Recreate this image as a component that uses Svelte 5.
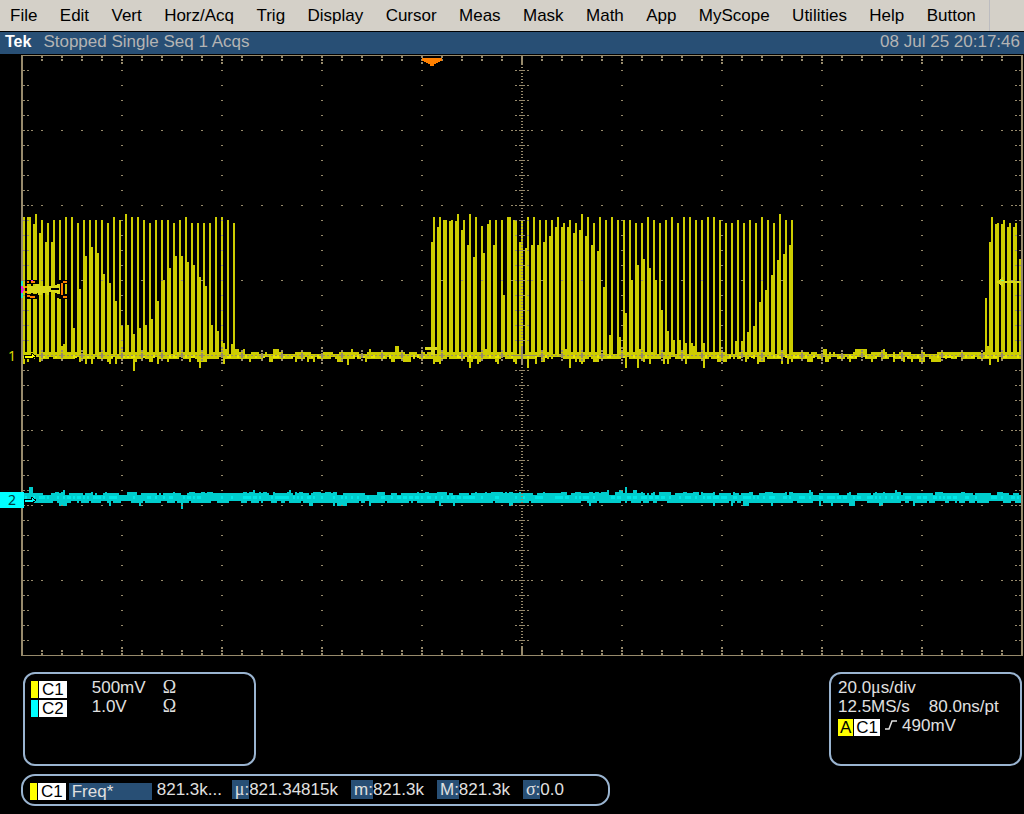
<script lang="ts">
  const menus = [
    'File', 'Edit', 'Vert', 'Horz/Acq', 'Trig', 'Display', 'Cursor', 'Meas',
    'Mask', 'Math', 'App', 'MyScope', 'Utilities', 'Help', 'Button',
  ];

  const channels = [
    { name: 'C1', scale: '500mV', color: 'yellow' },
    { name: 'C2', scale: '1.0V', color: 'cyan' },
  ];

  const stats = [
    { label: 'μ', value: '821.34815k', greek: true },
    { label: 'm', value: '821.3k' },
    { label: 'M', value: '821.3k' },
    { label: 'σ', value: '0.0', greek: true },
  ];

  // graticule: 10 x 8 divisions
  const LEFT = 21;
  const TOP = 55;
  const WIDTH = 1000;
  const HEIGHT = 600;
  const MID_X = 521;
  const MID_Y = 355;

  // pulse columns as x, top
  const pulses = [
    [23, 217], [27, 217], [29, 217], [33, 224], [35, 214], [39, 233], [41, 220],
    [45, 242], [47, 223], [51, 242], [53, 220], [57, 298], [59, 220], [61, 346], [63, 344],
    [65, 217], [71, 217], [73, 328], [77, 223], [79, 289], [83, 220], [85, 256],
    [89, 220], [91, 247], [95, 220], [97, 253], [101, 220], [103, 274], [107, 223],
    [109, 283], [113, 217], [115, 301], [119, 220], [121, 325], [125, 214], [127, 325],
    [131, 217], [133, 334], [137, 217], [139, 328], [143, 220], [145, 325], [149, 223],
    [151, 319], [155, 220], [157, 301], [161, 220], [163, 280], [167, 220], [169, 268],
    [173, 223], [175, 256], [179, 220], [181, 256], [185, 217], [187, 262], [191, 223],
    [193, 265], [197, 223], [199, 277], [203, 223], [205, 286], [209, 223], [211, 325],
    [215, 217], [217, 331], [221, 217], [223, 343], [227, 220], [231, 344], [233, 223],
    [431, 242], [433, 217], [437, 227], [439, 217], [443, 220], [445, 220], [449, 221],
    [451, 220], [455, 221], [457, 214], [461, 230], [463, 220], [467, 245], [469, 214],
    [473, 257], [475, 217], [481, 226], [483, 253], [487, 224], [489, 220], [493, 245],
    [495, 220], [501, 220], [503, 295], [507, 217], [509, 217], [513, 220], [515, 220],
    [519, 242], [521, 220], [525, 248], [527, 217], [531, 245], [533, 217], [537, 245],
    [539, 220], [543, 242], [545, 220], [549, 236], [551, 220], [555, 227], [557, 217],
    [561, 227], [563, 223], [567, 227], [569, 220], [573, 233], [575, 223], [579, 230],
    [581, 214], [585, 236], [587, 217], [591, 245], [593, 223], [597, 251], [599, 217],
    [603, 287], [605, 220], [609, 335], [611, 217], [617, 220], [619, 337], [623, 220],
    [625, 313], [629, 220], [631, 280], [635, 223], [637, 265], [641, 223], [643, 259],
    [647, 217], [649, 268], [653, 220], [655, 280], [659, 223], [661, 310], [665, 220],
    [667, 331], [671, 217], [673, 340], [677, 223], [679, 340], [683, 217], [685, 343],
    [689, 217], [691, 343], [693, 346], [695, 220], [701, 220], [703, 343], [707, 217],
    [713, 217], [719, 220], [725, 223], [731, 223], [735, 341], [737, 220], [741, 341],
    [743, 223], [747, 332], [749, 220], [753, 326], [755, 223], [759, 302], [761, 217],
    [765, 290], [767, 220], [771, 275], [773, 223], [777, 260], [779, 214], [783, 254],
    [785, 220], [789, 245], [791, 220],
    [985, 298], [987, 346], [989, 242], [991, 217], [995, 224], [997, 223], [1001, 224],
    [1003, 220], [1007, 227], [1009, 223], [1013, 227], [1015, 223], [1019, 259],
  ];

  // undershoot spikes as x, bottom
  const dips = [
    [23, 364], [85, 364], [91, 364], [109, 364], [115, 364], [133, 371], [157, 364],
    [199, 368], [223, 364], [347, 365], [433, 364], [439, 364], [469, 368], [477, 364],
    [497, 364], [515, 364], [527, 368], [535, 364], [569, 368], [581, 364], [625, 368],
    [637, 368], [649, 364], [663, 364], [667, 364], [685, 364], [703, 368], [757, 364],
    [781, 364], [787, 364], [989, 365],
  ];

  function box(x: number, y: number, w: number, h: number) {
    return `M${x} ${y}h${w}v${h}h-${w}z`;
  }

  function random(seed: number) {
    return () => {
      seed = (seed * 1664525 + 1013904223) % 4294967296;
      return seed / 4294967296;
    };
  }

  function channel1() {
    const rnd = random(7);
    let body = '';
    let hot = '';
    let top = 352;
    let bottom = 359;
    for (let x = 23; x < 1021; x += 2) {
      if (rnd() > 0.4) {
        const r = rnd();
        top = r > 0.9 ? 349 : r > 0.25 ? 352 : 354;
      }
      if (rnd() > 0.3) {
        const s = rnd();
        bottom = s > 0.85 ? 362 : s > 0.2 ? 359 : 357;
      }
      body += box(x, top, 2, bottom - top);
      if (rnd() > 0.72) hot += box(x, 355, 2, 3);
    }
    for (const [x, y] of pulses) body += box(x, y, 2, 357 - y);
    for (const [x, y] of dips) body += box(x, 355, 2, y - 355);
    body += box(395, 346, 4, 10);
    return { body, hot };
  }

  function channel2() {
    const rnd = random(23);
    let body = '';
    let hot = '';
    let top = 493;
    let bottom = 503;
    for (let x = 23; x < 1021; x += 2) {
      if (rnd() > 0.4) {
        const r = rnd();
        top = r > 0.95 ? 490 : r > 0.45 ? 493 : r > 0.15 ? 492 : 495;
      }
      if (rnd() > 0.4) {
        const s = rnd();
        bottom = s > 0.93 ? 506 : s > 0.25 ? 503 : 501;
      }
      body += box(x, top, 2, bottom - top);
      if (rnd() > 0.6) hot += box(x, 496, 2, 3);
    }
    body += box(29, 487, 4, 10) + box(181, 498, 2, 11) + box(625, 487, 2, 10);
    return { body, hot };
  }

  function graticule() {
    let d = '';
    // frame
    d += box(LEFT, TOP, WIDTH + 2, 1) + box(LEFT, TOP + HEIGHT, WIDTH + 2, 1);
    d += box(LEFT, TOP, 2, HEIGHT) + box(LEFT + WIDTH, TOP, 2, HEIGHT);

    for (let x = LEFT + 20; x < LEFT + WIDTH; x += 20) {
      const division = (x - LEFT) % 100 === 0;
      d += box(x, 56, 2, 2) + box(x, 59, 2, 2);
      d += box(x, 650, 2, 2) + box(x, 653, 2, 2);
      if (division) d += box(x, 62, 2, 2) + box(x, 647, 2, 2);
      for (let y = TOP + 75; y < TOP + HEIGHT; y += 75) {
        if (y !== MID_Y) d += box(x, y, 2, 1);
      }
      d += box(x, 350, 2, 2) + box(x, 353, 2, 5) + box(x, 359, 2, 2);
      if (division) d += box(x, 347, 2, 2) + box(x, 362, 2, 2);
    }

    for (let y = TOP + 15; y < TOP + HEIGHT; y += 15) {
      for (let x = LEFT + 100; x < LEFT + WIDTH; x += 100) {
        if (x !== MID_X) d += box(x, y, 2, 1);
      }
      d += box(23, y, 2, 1) + box(27, y, 2, 1);
      d += box(1015, y, 2, 1) + box(1019, y, 2, 1);
      d += box(515, y, 2, 1) + box(519, y, 6, 1) + box(527, y, 2, 1);
      if ((y - TOP) % 75 === 0) {
        d += box(31, y, 2, 1) + box(1011, y, 2, 1);
        d += box(511, y, 2, 1) + box(531, y, 2, 1);
      }
    }

    // centre axes
    for (let x = 23; x < LEFT + WIDTH; x += 4) d += box(x, MID_Y, 2, 1);
    for (let y = 58; y < TOP + HEIGHT; y += 3) d += box(MID_X, y, 2, 1);
    d += box(MID_X, 56, 2, 8) + box(MID_X, 647, 2, 8);
    d += box(511, MID_Y, 24, 1) + box(MID_X, 346, 2, 19);
    return d;
  }

  const ch1 = channel1();
  const ch2 = channel2();
  const grid = graticule();
</script>

<main>
  <nav class="menubar">
    {#each menus as menu}
      <button>{menu}</button>
    {/each}
  </nav>

  <header class="status">
    <strong>Tek</strong>
    <span>Stopped Single Seq 1 Acqs</span>
    <time>08 Jul 25 20:17:46</time>
  </header>

  <svg class="screen" viewBox="0 54 1024 604" shape-rendering="crispEdges">
    <path d={ch1.body} fill="#cdcd00" />
    <path d={ch1.hot} fill="#e6e600" />
    <path d={ch2.body} fill="#00cdcd" />
    <path d={ch2.hot} fill="#00e6e6" />
    <path d={grid} fill="#978a6b" />

    <!-- trigger position -->
    <path d="M422 58h20v3h-2v1h-2v1h-2v1h-2v2h-4v-2h-2v-1h-2v-1h-2v-1h-2z" fill="#ff8000" />
    <path d="M425 347h12v3h-12zM431 349h4v6h-4z" fill="#d9d91a" />

    <!-- trigger level -->
    <path d="M1003 277v10l-5-4h-1v-2h1zM1003 281h18v2h-18z" fill="#d9d91a" />
    <path d="M1001 280h3v1h-3z" fill="#7fff7f" />

    <!-- measurement gate -->
    <path d="M27 280h10v4h-10zM27 294h10v5h-10zM59 280h8v4h-8zM59 294h8v5h-8zM59 284h6v10h-6z" fill="#000" />
    <path d="M27 286h8v-2h5v2h14l4-2h2v10h-2l-4-2h-5v3h-2v-2h-5v2h-4v-2h-11z" fill="#d9d91a" />
    <path d="M51 288h8v2h-8z" fill="#000" />
    <path
      d="M27 281h2v2h-2zM31 281h4v2h-4zM27 295h3v2h-3zM30 296h5v2h-5zM25 286h2v2h-2zM23 288h2v2h-2zM25 291h2v2h-2zM63 281h4v2h-4zM61 283h2v12h-2zM63 296h4v2h-4z"
      fill="#ff8000"
    />
    <path d="M21 281h2v5h-2zM21 293h2v5h-2z" fill="#1ad9d9" />
    <path d="M21 286h2v3h-2zM21 290h2v3h-2zM23 288h1v3h-1zM31 280h2v1h-2z" fill="#e61ae6" />

    <!-- channel references -->
    <text x="8" y="361" fill="#d9d900">1</text>
    <path d="M24 355h7v-2l5 3-5 4v-2h-7z" fill="#ff0" stroke="#000" />
    <rect x="0" y="492" width="24" height="16" fill="#0ff" />
    <text x="8" y="505" fill="#003c3c">2</text>
    <path d="M24 499h7v-2l5 3-5 4v-2h-7z" fill="#0ff" stroke="#000" />
  </svg>

  <section class="readouts">
    <div class="panel vertical">
      {#each channels as channel}
        <div class="row">
          <span class="tag"><i class={channel.color}></i><b>{channel.name}</b></span>
          <span class="scale">{channel.scale}</span>
          <span class="greek">Ω</span>
        </div>
      {/each}
    </div>

    <div class="panel horizontal">
      <div>20.0<span class="greek">μ</span>s/div</div>
      <div class="rate"><span>12.5MS/s</span><span>80.0ns/pt</span></div>
      <div class="trigger">
        <span class="tag"><b class="yellow">A</b><b>C1</b></span>
        <svg width="12" height="12" viewBox="0 0 12 12">
          <path d="M0 10h4L7 2h5" fill="none" stroke="#e0e0e0" stroke-width="1.5" />
        </svg>
        <span>490mV</span>
      </div>
    </div>
  </section>

  <section class="panel measurement">
    <span class="tag"><i class="yellow"></i><b>C1</b></span>
    <span class="name">Freq*</span>
    <span class="value">821.3k...</span>
    {#each stats as stat}
      <span class="stat"><em><span class:greek={stat.greek}>{stat.label}</span>:</em>{stat.value}</span>
    {/each}
  </section>
</main>

<style>
  :global(body) {
    margin: 0;
    background: #000;
  }

  main {
    min-height: 100vh;
    background: #000;
    color: #e0e0e0;
    font: 17px/19px 'Liberation Sans', Arial, sans-serif;
  }

  .menubar {
    display: flex;
    justify-content: space-between;
    height: 31px;
    padding-right: 34px;
    background: #d4d0c8;
    border-bottom: 1px solid #000;
  }

  .menubar button {
    padding: 0 10px;
    border: 0;
    background: none;
    color: #000;
    font: inherit;
    white-space: nowrap;
  }

  .menubar button:last-child {
    padding-right: 13px;
    border-right: 1px solid #bcbcc0;
  }

  .status {
    display: flex;
    height: 22px;
    padding: 0 4px 0 5px;
    gap: 12px;
    background: #284f75;
    color: #b4b4b4;
    line-height: 20px;
  }

  .status strong {
    color: #fff;
    font-size: 16px;
  }

  .status time {
    margin-left: auto;
  }

  .screen {
    display: block;
    width: 100%;
    font: 14px 'Noto Sans', sans-serif;
  }

  .readouts {
    display: flex;
    justify-content: space-between;
    padding: 14px 2px 8px 23px;
  }

  .panel {
    box-sizing: border-box;
    border: 2px solid #9ab4d0;
    border-radius: 12px;
  }

  .vertical,
  .horizontal {
    width: 233px;
    height: 94px;
    padding: 4px 6px;
  }

  .horizontal {
    width: 193px;
    padding: 4px 7px;
  }

  .row,
  .trigger {
    display: flex;
    height: 19px;
  }

  .greek {
    font-family: 'Liberation Serif', serif;
    font-size: 18px;
    line-height: 1;
  }

  .row .greek {
    line-height: 19px;
  }

  .tag {
    display: flex;
    gap: 1px;
    margin-top: 3px;
    height: 17px;
    line-height: 18px;
  }

  .tag i {
    width: 7px;
  }

  .tag b {
    padding: 0 3px;
    background: #fff;
    color: #000;
    font-weight: normal;
  }

  .tag .yellow {
    background: #ff0;
  }

  .tag .cyan {
    background: #0ff;
  }

  .scale {
    width: 71px;
    margin-left: 25px;
  }

  .rate {
    display: flex;
    gap: 19px;
  }

  .trigger {
    gap: 5px;
  }

  .trigger .tag b {
    padding: 0 2px;
  }

  .trigger svg {
    margin-top: 3px;
  }

  .measurement {
    display: flex;
    width: 589px;
    height: 32px;
    margin-left: 21px;
    padding: 4px 7px;
    border-radius: 14px;
    white-space: nowrap;
  }

  .name {
    width: 80px;
    height: 17px;
    margin: 3px 5px 0 3px;
    padding-left: 3px;
    background: #284f75;
    line-height: 17px;
  }

  .value {
    width: 75px;
  }

  .stat {
    margin-right: 13px;
  }

  .stat em {
    padding-left: 3px;
    background: #284f75;
    font-style: normal;
  }
</style>
